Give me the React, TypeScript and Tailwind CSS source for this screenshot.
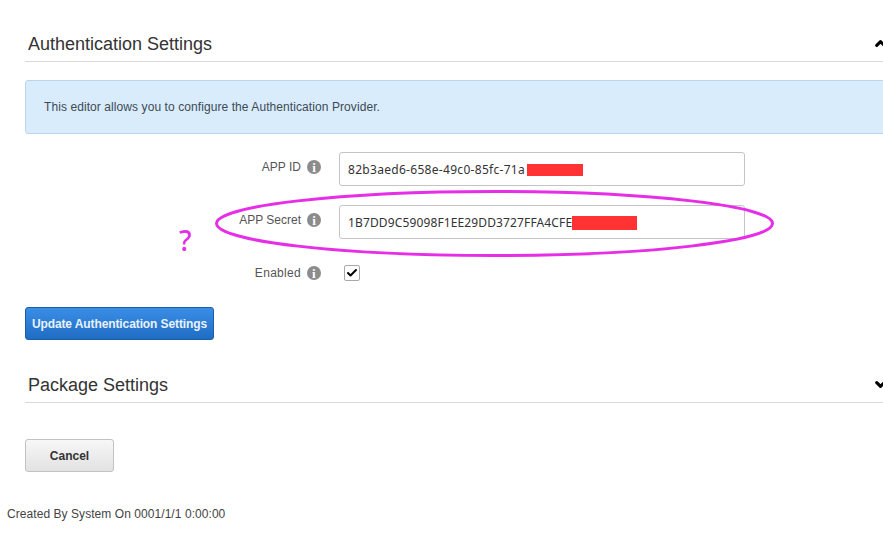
import { ChevronDown, ChevronUp, Check } from 'lucide-react'

function SectionHeader({ title, open }: { title: string; open?: boolean }) {
  return (
    <div className="flex h-[38px] items-center justify-between border-b border-[#d9d9d9] pl-[3px] pt-[2px]">
      <h2 className="text-[18px] leading-none text-[#333]">{title}</h2>
      <div className="-mr-[5px] text-black">
        {open ? <ChevronUp size={15} strokeWidth={5} /> : <ChevronDown size={15} strokeWidth={5} />}
      </div>
    </div>
  )
}

function FieldLabel({ label, className }: { label: string; className: string }) {
  return (
    <div className={`flex w-[296px] items-center justify-end gap-[6px] ${className}`}>
      <span className="text-[12px] leading-none text-[#555]">{label}</span>
      <span className="flex h-[14px] w-[14px] items-center justify-center rounded-full bg-[#8c8c8c]">
        <span className="font-['Liberation_Serif',serif] text-[13px] font-bold leading-none text-white">i</span>
      </span>
    </div>
  )
}

function TextField({ value, barClass, textClass }: { value: string; barClass: string; textClass: string }) {
  return (
    <div className="ml-[18px] flex h-[34px] w-[406px] items-center rounded-[3px] border border-[#c4c4c4] bg-white pl-[8px] pt-[1px] font-['Noto_Sans',sans-serif] text-[12px] text-[#333]">
      <span className={textClass}>{value}</span>
      <span className={`bg-[#ff3333] ${barClass}`} />
    </div>
  )
}

export default function App() {
  return (
    <div className="relative h-[542px] w-[883px] overflow-hidden bg-white font-['Liberation_Sans',Arial,sans-serif]">
      <div className="ml-[25px] w-[858px] pt-[24px]">
        <SectionHeader title="Authentication Settings" open />

        <div className="mt-[18px] -mr-[10px] flex h-[54px] items-center rounded-[3px] border border-[#b9d6ee] bg-[#d9ecfc] pl-[18px] text-[12px] tracking-[0.08px] text-[#3d4a55]">
          This editor allows you to configure the Authentication Provider.
        </div>

        <div className="mt-[18px] flex flex-col gap-[19px]">
          <div className="flex items-center">
            <FieldLabel label="APP ID" className="pb-[4px]" />
            <TextField value="82b3aed6-658e-49c0-85fc-71a" textClass="tracking-[0.3px]" barClass="ml-[2px] h-[12px] w-[56px]" />
          </div>
          <div className="flex items-center">
            <FieldLabel label="APP Secret" className="pb-[4px]" />
            <TextField value="1B7DD9C59098F1EE29DD3727FFA4CFE" textClass="tracking-[0.13px]" barClass="h-[14px] w-[65px]" />
          </div>
          <div className="mt-[7px] flex items-center">
            <FieldLabel label="Enabled" className="tracking-[0.3px]" />
            <div className="ml-[23px] flex h-[16px] w-[16px] items-center justify-center rounded-[2px] border border-[#a9a9a9] bg-white">
              <Check size={12} strokeWidth={4} className="text-black" />
            </div>
          </div>
        </div>

        <button className="mt-[26px] block h-[33px] w-[189px] rounded-[3px] border border-[#1a5ea8] bg-gradient-to-b from-[#3a8ee6] to-[#1f6cc4] text-[12px] font-bold tracking-[-0.1px] text-[#e8f2fc]">
          Update Authentication Settings
        </button>

        <div className="mt-[25px]">
          <SectionHeader title="Package Settings" />
        </div>

        <button className="mt-[36px] block h-[33px] w-[89px] rounded-[3px] border border-[#c2c2c2] bg-gradient-to-b from-[#f7f7f7] to-[#e2e2e2] text-[12px] font-bold text-[#333]">
          Cancel
        </button>
      </div>

      <div className="ml-[7px] mt-[35px] text-[12px] leading-[14px] tracking-[0.06px] text-[#444]">Created By System On 0001/1/1 0:00:00</div>

      {/* annotation drawn over the form */}
      <svg className="absolute left-0 top-0" width="883" height="542" fill="none">
        <ellipse cx="494.5" cy="223.5" rx="278" ry="32" stroke="#e62ee6" strokeWidth="3" />
      </svg>
      <span className="absolute left-[179px] top-[222px] font-['Noto_Sans',sans-serif] text-[28px] font-medium leading-[36px] text-[#e62ee6]">?</span>
    </div>
  )
}
